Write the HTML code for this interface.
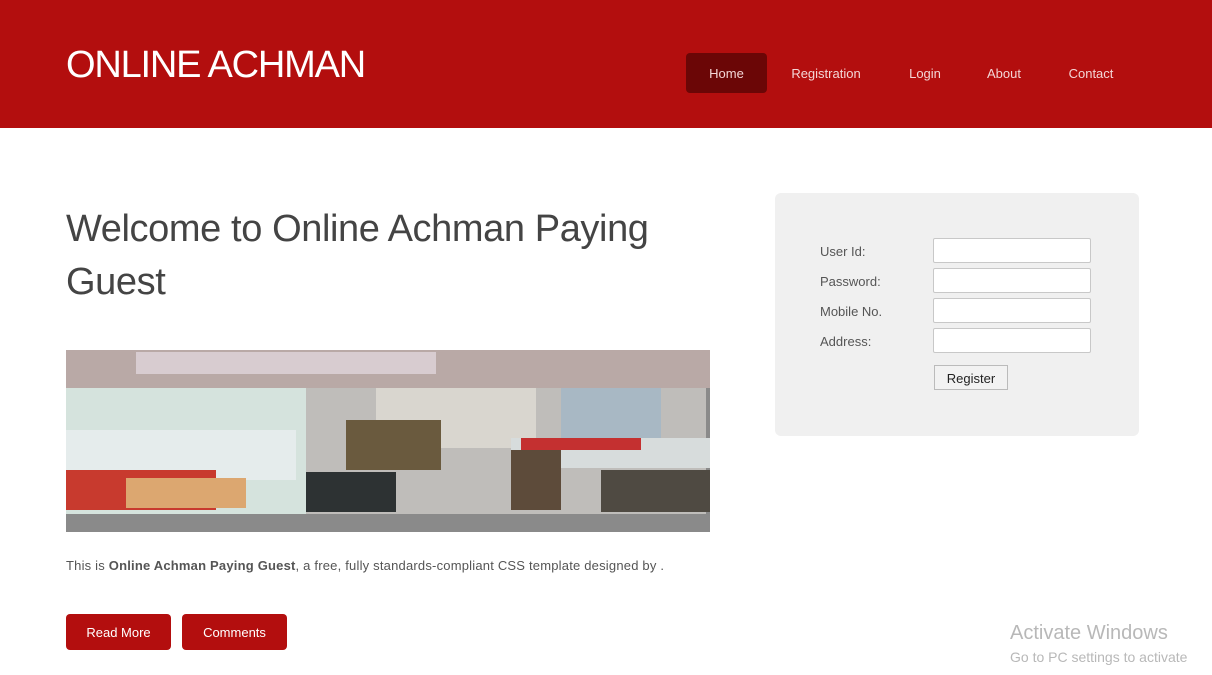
<!DOCTYPE html>
<html><head><meta charset="utf-8"><style>
*{margin:0;padding:0;box-sizing:border-box}
body{width:1212px;height:675px;background:#fff;font-family:"Liberation Sans",sans-serif;position:relative;overflow:hidden;color:#444}
.hdr{position:absolute;left:0;top:0;width:1212px;height:128px;background:#b30e0e}
.logo{position:absolute;left:66px;top:44px;color:#fff;font-size:38px;letter-spacing:-1.2px}
.nav a{position:absolute;top:54px;height:40px;line-height:40px;color:#f3d6d6;font-size:13px;text-decoration:none;text-align:center}
.nav a.home{left:686px;width:81px;background:#6b0606;border-radius:4px;top:53px;line-height:42px}
h1{position:absolute;left:66px;top:203px;font-weight:normal;font-size:38px;line-height:53px;color:#444;width:640px;letter-spacing:-0.4px}
.photo{position:absolute;left:66px;top:350px;width:644px;height:182px;background:#8a8a8a;overflow:hidden}
.p{position:absolute}
.txt{position:absolute;left:66px;top:558px;font-size:13px;color:#555;letter-spacing:0.2px}
.btn{position:absolute;top:614px;height:36px;line-height:38px;background:#b30e0e;color:#fff;font-size:13px;text-align:center;border-radius:4px}
.box{position:absolute;left:775px;top:193px;width:364px;height:243px;background:#f0f0f0;border-radius:6px}
.lb{position:absolute;left:820px;font-size:13px;color:#555}
.in{position:absolute;left:933px;width:158px;height:25px;background:#fff;border:1px solid #c8c8c8;border-radius:2px}
.reg{position:absolute;left:934px;top:365px;width:74px;height:25px;border:1px solid #bbb;background:#f2f2f2;font-size:13px;color:#222;text-align:center;line-height:25px}
.wm{position:absolute;left:1010px;color:#b8b8b8}
</style></head><body>
<div class="hdr"></div>
<div class="logo">ONLINE ACHMAN</div>
<div class="nav">
<a class="home">Home</a>
<a style="left:780px;width:92px">Registration</a>
<a style="left:900px;width:50px">Login</a>
<a style="left:978px;width:52px">About</a>
<a style="left:1060px;width:62px">Contact</a>
</div>
<h1>Welcome to Online Achman Paying Guest</h1>
<div class="photo">
<div class="p" style="left:0;top:0;width:644px;height:38px;background:#b9a9a6"></div>
<div class="p" style="left:70px;top:2px;width:300px;height:22px;background:#d8ccd0"></div>
<div class="p" style="left:0;top:38px;width:240px;height:128px;background:#d5e3dd"></div>
<div class="p" style="left:240px;top:38px;width:400px;height:128px;background:#bfbdba"></div>
<div class="p" style="left:310px;top:38px;width:160px;height:60px;background:#d9d6cf"></div>
<div class="p" style="left:495px;top:38px;width:100px;height:60px;background:#a8b8c4"></div>
<div class="p" style="left:0;top:80px;width:230px;height:50px;background:#e5ecec"></div>
<div class="p" style="left:0;top:120px;width:150px;height:40px;background:#c83a2e"></div>
<div class="p" style="left:60px;top:128px;width:120px;height:30px;background:#dca770"></div>
<div class="p" style="left:280px;top:70px;width:95px;height:50px;background:#6a5a3e"></div>
<div class="p" style="left:240px;top:122px;width:90px;height:40px;background:#2d3233"></div>
<div class="p" style="left:445px;top:88px;width:199px;height:30px;background:#d7dcdc"></div>
<div class="p" style="left:455px;top:88px;width:120px;height:12px;background:#c43030"></div>
<div class="p" style="left:445px;top:100px;width:50px;height:60px;background:#5d4b3a"></div>
<div class="p" style="left:535px;top:120px;width:109px;height:42px;background:#4f4a42"></div>
<div class="p" style="left:0;top:164px;width:644px;height:18px;background:#8a8a8a"></div>
</div>
<div class="txt">This is <b>Online Achman Paying Guest</b>, a free, fully standards-compliant CSS template designed by .</div>
<div class="btn" style="left:66px;width:105px">Read More</div>
<div class="btn" style="left:182px;width:105px">Comments</div>
<div class="box"></div>
<div class="lb" style="top:244px">User Id:</div>
<div class="lb" style="top:274px">Password:</div>
<div class="lb" style="top:304px">Mobile No.</div>
<div class="lb" style="top:334px">Address:</div>
<div class="in" style="top:238px"></div>
<div class="in" style="top:268px"></div>
<div class="in" style="top:298px"></div>
<div class="in" style="top:328px"></div>
<div class="reg">Register</div>
<div class="wm" style="top:622px;font-size:20px">Activate Windows</div>
<div class="wm" style="top:649px;font-size:14px">Go to PC settings to activate</div>
</body></html>
